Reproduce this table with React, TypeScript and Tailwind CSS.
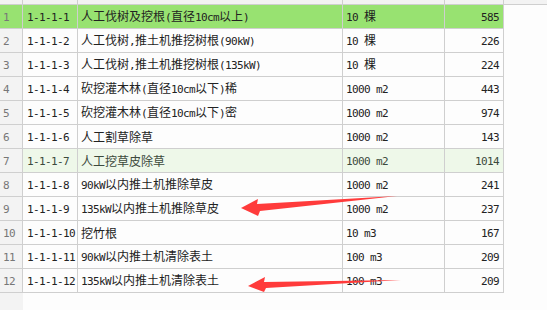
import React from "react";

const rows: [string, string, string, string][] = [
  ["1-1-1-1", "人工伐树及挖根(直径10cm以上)", "10 棵", "585"],
  ["1-1-1-2", "人工伐树,推土机推挖树根(90kW)", "10 棵", "226"],
  ["1-1-1-3", "人工伐树,推土机推挖树根(135kW)", "10 棵", "224"],
  ["1-1-1-4", "砍挖灌木林(直径10cm以下)稀", "1000 m2", "443"],
  ["1-1-1-5", "砍挖灌木林(直径10cm以下)密", "1000 m2", "974"],
  ["1-1-1-6", "人工割草除草", "1000 m2", "143"],
  ["1-1-1-7", "人工挖草皮除草", "1000 m2", "1014"],
  ["1-1-1-8", "90kW以内推土机推除草皮", "1000 m2", "241"],
  ["1-1-1-9", "135kW以内推土机推除草皮", "1000 m2", "237"],
  ["1-1-1-10", "挖竹根", "10 m3", "167"],
  ["1-1-1-11", "90kW以内推土机清除表土", "100 m3", "209"],
  ["1-1-1-12", "135kW以内推土机清除表土", "100 m3", "209"],
];

const cell = "h-full border-r border-[#cfcfcf] flex items-center whitespace-pre";

// half-width chars get a 6px mono face, like the grid's bitmap font
function Txt({ s }: { s: string }) {
  const parts = s.match(/[\x20-\x7e]+|[^\x20-\x7e]+/g) ?? [];
  return (
    <span>
      {parts.map((p, i) =>
        /^[\x20-\x7e]/.test(p) ? (
          <span
            key={i}
            className="text-[11px] tracking-[-0.62px]"
            style={{ fontFamily: '"DejaVu Sans Mono", monospace' }}
          >
            {p}
          </span>
        ) : (
          <span key={i}>{p}</span>
        )
      )}
    </span>
  );
}

export default function App() {
  return (
    <div
      className="relative w-[547px] h-[310px] overflow-hidden bg-[#fdfdfd] text-[12px] text-[#222]"
      style={{ fontFamily: '"Noto Sans CJK SC", sans-serif' }}
    >
      {/* header strip, cut off at the top */}
      <div className="flex h-[5px] bg-[#f3f3f3] border-b border-[#cfcfcf]">
        <div className="w-[23px] border-r border-[#cfcfcf]" />
        <div className="w-[55px] border-r border-[#cfcfcf]" />
        <div className="w-[265px] border-r border-[#cfcfcf]" />
        <div className="w-[102px] border-r border-[#cfcfcf]" />
        <div className="w-[59px] border-r border-[#cfcfcf]" />
      </div>

      {rows.map((r, i) => {
        const bg = i === 0 ? "bg-[#98e271]" : i === 6 ? "bg-[#eef8e9] text-[#3c4a3c]" : "bg-[#fdfdfd]";
        const numBg = i === 0 ? "bg-[#98e271]" : "bg-[#f3f3f3]";
        return (
          <div key={i} className="flex h-[24px]">
            <div className={`${cell} w-[23px] pl-[3px] text-[#777] border-b ${numBg}`}>
              <Txt s={String(i + 1)} />
            </div>
            <div className={`flex h-full border-b border-[#cfcfcf] ${bg}`}>
              <div className={`${cell} w-[55px] pl-[4px]`}><Txt s={r[0]} /></div>
              <div className={`${cell} w-[265px] pl-[3px]`}><Txt s={r[1]} /></div>
              <div className={`${cell} w-[102px] pl-[3px]`}><Txt s={r[2]} /></div>
              <div className={`${cell} w-[59px] justify-end pr-[4px]`}><Txt s={r[3]} /></div>
            </div>
          </div>
        );
      })}

      <div className="flex h-[20px]">
        <div className="w-[23px] bg-[#f3f3f3]" />
      </div>

      {/* red annotation arrows */}
      <svg className="absolute left-0 top-0" width="547" height="310">
        <polygon points="241,208 258,199 257,204 397,196 260,211 258,216" fill="#ff3b3b" />
        <polygon points="248,286 265,277 264,282 401,280 266,288 264,292" fill="#ff3b3b" />
      </svg>
    </div>
  );
}
